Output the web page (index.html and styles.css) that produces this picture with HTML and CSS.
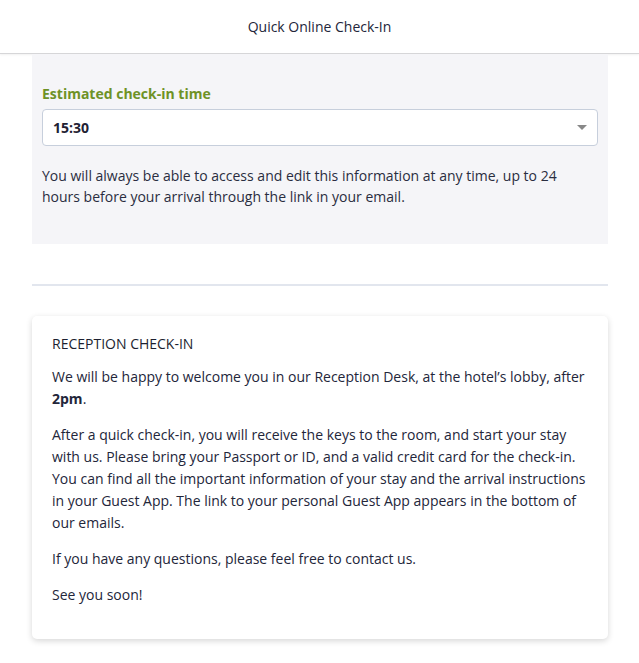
FILE: index.html
```html
<!DOCTYPE html>
<html>
<head>
<meta charset="utf-8">
<link rel="stylesheet" href="styles.css">
</head>
<body>
<header class="topbar">Quick Online Check-In</header>
<main class="content">
  <section class="panel">
    <label class="field-label">Estimated check-in time</label>
    <div class="select">
      <span class="select-value">15:30</span>
      <span class="caret"></span>
    </div>
    <p class="hint">You will always be able to access and edit this information at any time, up to 24 hours before your arrival through the link in your email.</p>
  </section>
  <hr class="divider">
  <section class="card">
    <h2 class="card-title">RECEPTION CHECK-IN</h2>
    <p>We will be happy to welcome you in our Reception Desk, at the hotel’s lobby, after <strong>2pm</strong>.</p>
    <p>After a quick check-in, you will receive the keys to the room, and start your stay with us. Please bring your Passport or ID, and a valid credit card for the check-in. You can find all the important information of your stay and the arrival instructions in your Guest App. The link to your personal Guest App appears in the bottom of our emails.</p>
    <p>If you have any questions, please feel free to contact us.</p>
    <p>See you soon!</p>
  </section>
</main>
</body>
</html>
```
FILE: styles.css
```css
* { box-sizing: border-box; }
html, body { margin: 0; padding: 0; background: #fff; }
body {
  font-family: "Open Sans", "Noto Sans", sans-serif;
  font-size: 14px;
  color: #23263a;
}
.topbar {
  height: 54px;
  display: flex;
  align-items: center;
  justify-content: center;
  border-bottom: 1px solid #d6d6d8;
  box-shadow: 0 1px 2px rgba(0,0,0,0.06);
  font-size: 14px;
  color: #23263a;
}
.content {
  margin: 0 31px 0 32px;
  padding-bottom: 25px;
}
.panel {
  background: #f5f5f8;
  padding: 30px 10px 37px;
}
.field-label {
  display: block;
  font-weight: 700;
  color: #6e9226;
  line-height: 20px;
  margin-bottom: 5px;
}
.select {
  height: 37px;
  background: #fff;
  border: 1px solid #c7cfdc;
  border-radius: 4px;
  display: flex;
  align-items: center;
  justify-content: space-between;
  padding: 0 10px 0 10px;
}
.select-value {
  font-weight: 700;
  color: #1f2233;
}
.caret {
  width: 0;
  height: 0;
  border-left: 5px solid transparent;
  border-right: 5px solid transparent;
  border-top: 5px solid #888;
}
.hint {
  margin: 19px 0 0;
  line-height: 21px;
  color: #2a2d40;
}
.divider {
  border: 0;
  height: 2px;
  background: #e2e6ee;
  margin: 40px 0 30px;
}
.card {
  background: #fff;
  border-radius: 5px;
  box-shadow: 0 2px 6px rgba(0,0,0,0.16);
  padding: 18px 20px 20px;
}
.card-title {
  margin: 0 0 12px;
  font-size: 14px;
  font-weight: 400;
  line-height: 20px;
  color: #1c1f30;
}
.card p {
  margin: 0 0 14px;
  line-height: 22px;
}
.card p:last-child { margin-bottom: 13px; }
.card strong { font-weight: 700; }
```
